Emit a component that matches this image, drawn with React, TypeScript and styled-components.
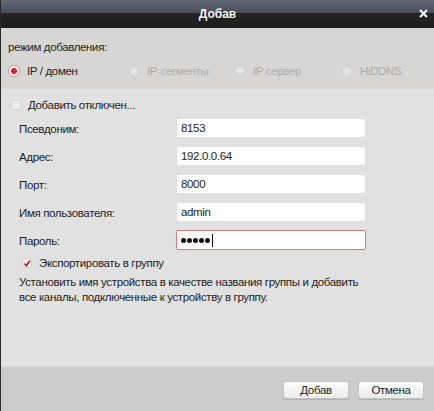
import React from "react";
import styled, { createGlobalStyle } from "styled-components";

const GlobalStyle = createGlobalStyle`
	html, body {
		margin: 0;
		padding: 0;
		background: #e1e1e1;
	}
	body {
		font-family: "Liberation Sans", Arial, sans-serif;
		font-size: 11.5px;
		letter-spacing: -0.35px;
		color: #1e1e1e;
	}
`;

const modes = [
	{ label: "IP / домен", active: true },
	{ label: "IP-сегменты", active: false },
	{ label: "IP сервер", active: false },
	{ label: "HiDDNS", active: false },
];

const fields = [
	{ label: "Псевдоним:", value: "8153" },
	{ label: "Адрес:", value: "192.0.0.64" },
	{ label: "Порт:", value: "8000" },
	{ label: "Имя пользователя:", value: "admin" },
];

const App = () => {
	return (
		<>
			<GlobalStyle />
			<Dialog>
				<TitleBar>
					<Title>Добав</Title>
					<CloseButton>
						<svg width="9" height="9" viewBox="0 0 9 9">
							<path d="M1 1 L8 8 M8 1 L1 8" stroke="#f2f2f2" strokeWidth="2.2" />
						</svg>
					</CloseButton>
				</TitleBar>

				<ModeSection>
					<ModeCaption>режим добавления:</ModeCaption>
					<ModeRow>
						{modes.map((m) => (
							<ModeOption key={m.label} $active={m.active}>
								<Radio $active={m.active} />
								{m.label}
							</ModeOption>
						))}
					</ModeRow>
				</ModeSection>

				<FormSection>
					<CheckRow $indent={10}>
						<CheckBox />
						Добавить отключен...
					</CheckRow>

					<Fields>
						{fields.map((f) => (
							<FieldRow key={f.label}>
								<FieldLabel>{f.label}</FieldLabel>
								<Input>{f.value}</Input>
							</FieldRow>
						))}
						<FieldRow>
							<FieldLabel>Пароль:</FieldLabel>
							<Input $focused>
								{[0, 1, 2, 3, 4].map((i) => (
									<Dot key={i} />
								))}
								<Caret />
							</Input>
						</FieldRow>
					</Fields>

					<CheckRow $indent={21}>
						<CheckBox $checked>
							<svg width="9" height="9" viewBox="0 0 9 9">
								<path d="M1.5 4.5 L3.8 7 L7.8 1.2" stroke="#c8101a" strokeWidth="1.8" fill="none" />
							</svg>
						</CheckBox>
						Экспортировать в группу
					</CheckRow>

					<Hint>
						Установить имя устройства в качестве названия группы и добавить
						<br />
						все каналы, подключенные к устройству в группу.
					</Hint>
				</FormSection>

				<Footer>
					<Button>Добав</Button>
					<Button>Отмена</Button>
				</Footer>
			</Dialog>
		</>
	);
};

const Dialog = styled.div`
	width: 434px;
	height: 411px;
	display: flex;
	flex-direction: column;
	box-sizing: border-box;
	border-left: 1px solid #2a2a2a;
	overflow: hidden;
`;

const TitleBar = styled.div`
	position: relative;
	height: 28px;
	flex-shrink: 0;
	display: flex;
	align-items: center;
	justify-content: center;
	background: linear-gradient(
		to bottom,
		#646b76 0,
		#474d57 13px,
		#232323 13px,
		#1e1e1e 28px
	);
`;

const Title = styled.div`
	color: #f4f4f4;
	font-size: 12px;
	font-weight: bold;
	letter-spacing: 0;
`;

const CloseButton = styled.div`
	position: absolute;
	right: 6px;
	top: 9px;
	width: 9px;
	height: 9px;
	display: flex;
`;

const ModeSection = styled.div`
	height: 61px;
	flex-shrink: 0;
	background: #d7d6d4;
	padding: 12px 0 0 7px;
	box-sizing: border-box;
`;

const ModeCaption = styled.div`
	line-height: 14px;
`;

const ModeRow = styled.div`
	display: grid;
	grid-template-columns: 120px 106px 107px auto;
	margin-top: 10px;
`;

const ModeOption = styled.div<{ $active: boolean }>`
	display: flex;
	align-items: center;
	gap: 7px;
	line-height: 14px;
	color: ${(p) => (p.$active ? "#1e1e1e" : "#acacac")};
`;

const Radio = styled.span<{ $active: boolean }>`
	width: 12px;
	height: 12px;
	border-radius: 50%;
	box-sizing: border-box;
	border: 1px solid ${(p) => (p.$active ? "#d69a9a" : "#cdcdcd")};
	background: ${(p) =>
		p.$active
			? "radial-gradient(circle, #d8232a 0, #d8232a 2.6px, #f3f3f3 3.4px)"
			: "radial-gradient(circle, #e8e8e8 0, #d9d9d9 6px)"};
	box-shadow: ${(p) => (p.$active ? "0 0 1px #e5b0b0" : "none")};
`;

const FormSection = styled.div`
	flex: 1;
	background: #e1e1e1;
	padding-top: 9px;
`;

const CheckRow = styled.div<{ $indent: number }>`
	display: flex;
	align-items: center;
	gap: 7px;
	padding-left: ${(p) => p.$indent}px;
	line-height: 14px;
`;

const CheckBox = styled.span<{ $checked?: boolean }>`
	width: 10px;
	height: 10px;
	display: flex;
	align-items: center;
	justify-content: center;
	box-sizing: border-box;
	border: 1px solid #cfcfcf;
	border-radius: 2px;
	background: ${(p) => (p.$checked ? "#f6f6f6" : "#ececec")};
`;

const Fields = styled.div`
	display: flex;
	flex-direction: column;
	gap: 8px;
	padding: 6px 0 6px 18px;
`;

const FieldRow = styled.div`
	display: flex;
	align-items: center;
`;

const FieldLabel = styled.div`
	width: 157px;
	padding-top: 1px;
`;

const Input = styled.div<{ $focused?: boolean }>`
	width: 190px;
	height: 20px;
	box-sizing: border-box;
	display: flex;
	align-items: center;
	gap: 1px;
	padding-left: 4px;
	background: #fff;
	border: 1px solid ${(p) => (p.$focused ? "#d87f7f" : "#dedede")};
	border-radius: 2px;
	box-shadow: ${(p) => (p.$focused ? "0 0 1px #e9a9a9" : "none")};
`;

const Dot = styled.span`
	width: 5px;
	height: 5px;
	border-radius: 50%;
	background: #111;
`;

const Caret = styled.span`
	width: 1px;
	height: 13px;
	margin-left: 1px;
	background: #111;
`;

const Hint = styled.div`
	padding: 5px 0 0 18px;
	line-height: 15px;
`;

const Footer = styled.div`
	height: 45px;
	flex-shrink: 0;
	box-sizing: border-box;
	background: #cdcdcd;
	border-top: 1px solid #d9d9d9;
	display: flex;
	justify-content: flex-end;
	align-items: flex-start;
	gap: 9px;
	padding: 14px 10px 0 0;
`;

const Button = styled.div`
	width: 66px;
	height: 18px;
	box-sizing: border-box;
	display: flex;
	align-items: center;
	justify-content: center;
	background: linear-gradient(to bottom, #fdfdfd, #ececec);
	border: 1px solid #c4c4c4;
	border-radius: 3px;
	box-shadow: 0 1px 1px rgba(0, 0, 0, 0.15);
	color: #1e1e1e;
`;

export default App;
